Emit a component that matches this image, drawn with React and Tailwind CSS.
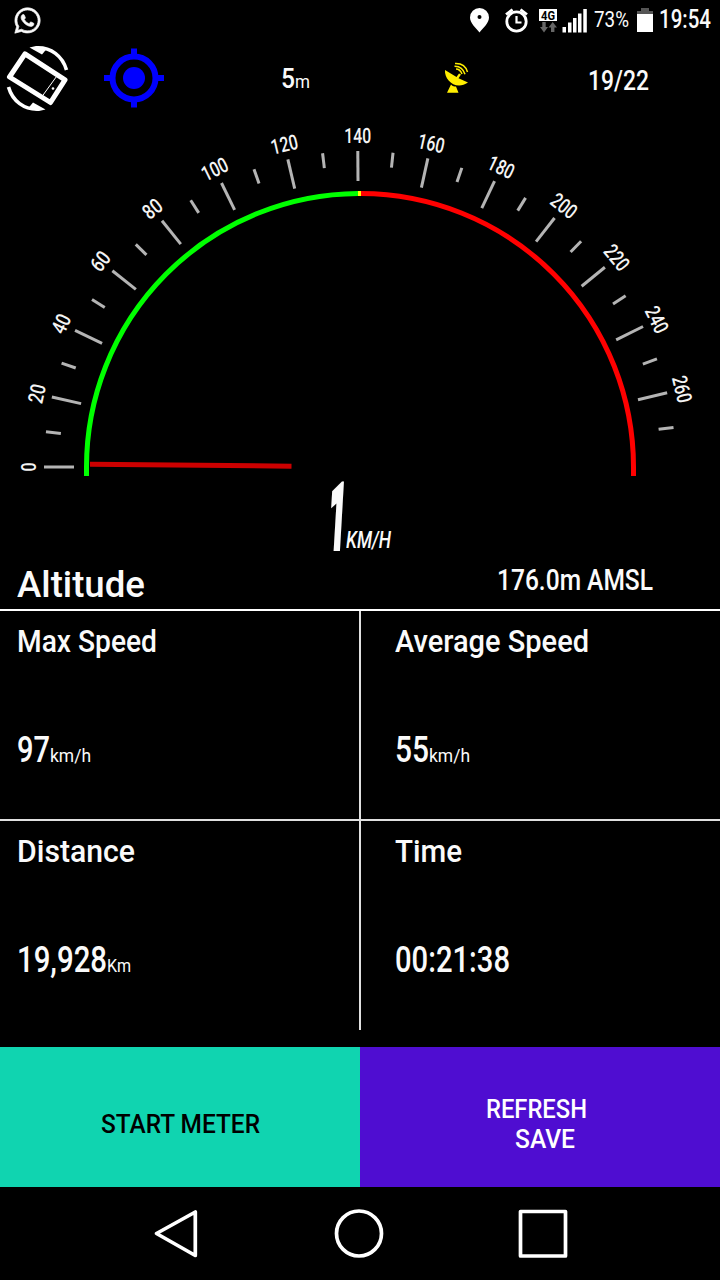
import React, { useLayoutEffect, useRef } from "react";
import { FaWhatsapp } from "react-icons/fa";

// Condenses or expands a single line of text to a given width.
function Fit({ width, className = "", children }) {
  const ref = useRef(null);
  useLayoutEffect(() => {
    const el = ref.current;
    el.style.transform = "none";
    const natural = el.getBoundingClientRect().width;
    el.style.transform = `scaleX(${width / natural})`;
  }, [width, children]);
  return (
    <span className={"block " + className} style={{ width }}>
      <span ref={ref} className="inline-block origin-left whitespace-nowrap">
        {children}
      </span>
    </span>
  );
}

const CX = 360;
const CY = 351;
const STEP = 6.4;

function Gauge() {
  const ticks = Array.from({ length: 28 }, (_, i) => i);
  return (
    <svg width="720" height="364" viewBox="0 0 720 364" className="block shrink-0">
      <path d="M86.5 360V351A273.5 273.5 0 0 1 358 77.5" fill="none" stroke="#00ff00" strokeWidth="5" />
      <path d="M361 77.5A273.5 273.5 0 0 1 633.5 351V360" fill="none" stroke="#ff0000" strokeWidth="5" />
      <path d="M358 77.5H361" stroke="#ffff00" strokeWidth="5" />
      {ticks.map((i) => {
        const major = i % 2 === 0;
        return (
          <g key={i} transform={`rotate(${i * STEP - 90} ${CX} ${CY})`}>
            <line x1={CX} x2={CX} y1={CY - 316} y2={CY - (major ? 286 : 301)} stroke="#b4b4b4" strokeWidth="3" />
            {major && (
              <text
                x={CX}
                y={CY - 324}
                textAnchor="middle"
                textLength={i === 0 ? 9 : i < 10 ? 19 : 27}
                lengthAdjust="spacingAndGlyphs"
                className="fill-[#f4f4f4] font-['Roboto',sans-serif] text-[21px] font-medium"
              >
                {i * 10}
              </text>
            )}
          </g>
        );
      })}
      <line x1="90" y1="348.3" x2="291.5" y2="350.2" stroke="#cc0000" strokeWidth="5" />
    </svg>
  );
}

function StatusBar() {
  return (
    <div className="flex h-10 shrink-0 items-center">
      <FaWhatsapp stroke="#fafafa" strokeWidth="12" className="ml-[13px] h-[29px] w-[29px]" />
      <svg width="126" height="40" viewBox="465 0 126 40" className="ml-[423px] block shrink-0">
        <path d="M479.500 8A9.500 9.500 0 0 0 470 17.500C470 23 476 28 479.500 32.500C483 28 489 23 489 17.500A9.500 9.500 0 0 0 479.500 8Z" fill="#fff" />
        <circle cx="479.500" cy="17" r="2" fill="#000" />
        <g fill="none" stroke="#fff">
          <circle cx="516.500" cy="21.500" r="9.700" strokeWidth="2.800" />
          <path d="M516.500 16V22.500H521.500" strokeWidth="2.200" />
          <path d="M506 14.500L512.500 9.500M520.500 9.500L527 14.500" strokeWidth="2.800" />
        </g>
        <rect x="539" y="9" width="18" height="12" fill="#fff" />
        <text x="548" y="19.500" textAnchor="middle" textLength="14" lengthAdjust="spacingAndGlyphs" className="fill-black font-['Roboto',sans-serif] text-[12px] font-bold">4G</text>
        <path d="M542.300 22H545.700V27H548L544 32.500L540 27H542.300ZM551 32V27.500H548.500L552.700 22L557 27.500H554.400V32Z" fill="#666" />
        <path d="M562.500 27h3.500v5.500h-3.500zM568 22.500h3.500v10h-3.500zM573 18h3.500v14.500h-3.500zM578 13.500h3.500v19h-3.500zM583.300 9h3.500v23.500h-3.500z" fill="#fff" />
      </svg>
      <Fit width={35} className="ml-[3px] text-[22px] leading-[44px]">73%</Fit>
      <svg width="17" height="26" viewBox="0 0 17 26" className="ml-[8px] block shrink-0">
        <path d="M4 1H12V4H16V8H0V4H4Z" fill="#555" />
        <rect y="7" width="16" height="18" fill="#fff" />
      </svg>
      <Fit width={52} className="ml-[5px] text-[25px] font-medium leading-[46px]">19:54</Fit>
    </div>
  );
}

function Header() {
  return (
    <div className="flex h-[76px] shrink-0 items-start">
      <svg width="76" height="76" viewBox="0 40 76 76" className="block shrink-0">
        <path d="M25 53.800L9.500 77L50.500 102.500L65 79.800Z" fill="none" stroke="#fff" strokeWidth="5" strokeLinejoin="round" />
        <path d="M56.500 76.500L42 96.500" stroke="#fff" strokeWidth="1" />
        <circle cx="53" cy="88.500" r="1.300" fill="#fff" />
        <path d="M36 47.800C51 47 62.500 56 66.500 70M39 109.200C24 110 12.500 101 8.500 87" fill="none" stroke="#fff" strokeWidth="3.600" />
        <path d="M29.500 47.500L36 46L47 48.500L42 54.500ZM45.500 109.500L39 111L28 108.500L33 102.500Z" fill="#fff" />
      </svg>
      <svg width="60" height="60" viewBox="104 48.500 60 60" className="ml-7 mt-[8px] block shrink-0">
        <circle cx="134" cy="78.500" r="21.500" fill="none" stroke="#0000ff" strokeWidth="6" />
        <circle cx="134" cy="78.500" r="11" fill="#0000ff" />
        <path d="M134 49V57M134 100V108M104 78.500H112M156 78.500H164" stroke="#0000ff" strokeWidth="6" />
      </svg>
      <div className="ml-[117px] mt-[18px] flex items-baseline">
        <Fit width={14} className="text-[27px] font-medium leading-[42px]">5</Fit>
        <Fit width={15} className="text-[19px]">m</Fit>
      </div>
      <svg width="26" height="32" viewBox="444 62 26 32" className="ml-[134px] mt-[22px] block shrink-0">
        <path d="M445 70L456.500 77L459 73.500L461 74.500L458.500 78.200L468 82.500C456 91 444 80 445 70ZM451 84.500C453 86.500 454 86.500 456 86.500L458.500 92.800H447Z" fill="#ffee00" />
        <path d="M456 69Q460 69 462 74M454.500 66.200Q462.500 66 465 74.300M455 63.500Q465 63 467.500 72" fill="none" stroke="#ffee00" strokeWidth="1.500" />
      </svg>
      <Fit width={61} className="ml-[118px] mt-[20px] text-[28px] font-medium leading-[42px]">19/22</Fit>
    </div>
  );
}

function Stat({ title, titleWidth, value, valueWidth, unit, unitWidth, className }) {
  return (
    <div className={className}>
      <Fit width={titleWidth} className="mt-[8px] text-[32px] font-medium leading-[44px]">{title}</Fit>
      <div className="mt-[65px] flex items-baseline">
        <Fit width={valueWidth} className="text-[37px] font-medium leading-[44px]">{value}</Fit>
        {unit && <Fit width={unitWidth} className="text-[18px]">{unit}</Fit>}
      </div>
    </div>
  );
}

export default function App() {
  return (
    <div className="flex h-[1280px] w-[720px] flex-col overflow-hidden bg-black font-['Roboto',sans-serif] text-[#fafafa]">
      <StatusBar />
      <Header />
      <Gauge />
      <div className="flex h-[80px] shrink-0 items-baseline pl-[329px] italic">
        <Fit width={17} className="text-[88px] font-bold leading-[76px] [-webkit-text-stroke:6px_#fafafa]">1</Fit>
        <Fit width={45} className="text-[23px] font-medium">KM/H</Fit>
      </div>
      <div className="flex h-[51px] shrink-0 justify-between border-b-2 border-white pl-[17px] pr-[67px]">
        <Fit width={128} className="mt-[3px] text-[36px] font-medium leading-[44px]">Altitude</Fit>
        <Fit width={156} className="-mt-[2px] text-[29px] font-medium leading-[44px]">176.0m AMSL</Fit>
      </div>
      <div className="grid h-[419px] shrink-0 grid-cols-[361px_359px] grid-rows-[210px_209px]">
        <Stat className="border-b-2 border-r-2 border-[#e0e0e0] pl-[17px]" title="Max Speed" titleWidth={140} value="97" valueWidth={33} unit="km/h" unitWidth={41} />
        <Stat className="border-b-2 border-[#e0e0e0] pl-[34px]" title="Average Speed" titleWidth={194} value="55" valueWidth={34} unit="km/h" unitWidth={41} />
        <Stat className="border-r-2 border-[#e0e0e0] pl-[17px]" title="Distance" titleWidth={118} value="19,928" valueWidth={90} unit="Km" unitWidth={24} />
        <Stat className="pl-[34px]" title="Time" titleWidth={67} value="00:21:38" valueWidth={115} />
      </div>
      <div className="mt-[17px] grid h-[140px] shrink-0 grid-cols-2 text-[26px] font-medium">
        <button className="flex items-center justify-center bg-[#10d4b0] pt-[15px] text-black">
          <Fit width={159} className="text-left">START METER</Fit>
        </button>
        <button className="flex flex-col items-start bg-[#4f0dd1] pl-[126px] pt-[47px] text-left leading-[30px] text-white">
          <Fit width={101}>REFRESH</Fit>
          <Fit width={60} className="ml-[29px]">SAVE</Fit>
        </button>
      </div>
      <div className="flex h-[93px] shrink-0 items-center pl-[153px]">
        <svg width="416" height="54" viewBox="153 1207 416 54" fill="none" stroke="#fff" strokeWidth="3.700" strokeLinejoin="round">
          <path d="M195.300 1212V1255.500L156.500 1233.500Z" />
          <circle cx="359" cy="1233.500" r="22.500" />
          <rect x="520.500" y="1211.500" width="45" height="44.500" />
        </svg>
      </div>
    </div>
  );
}
